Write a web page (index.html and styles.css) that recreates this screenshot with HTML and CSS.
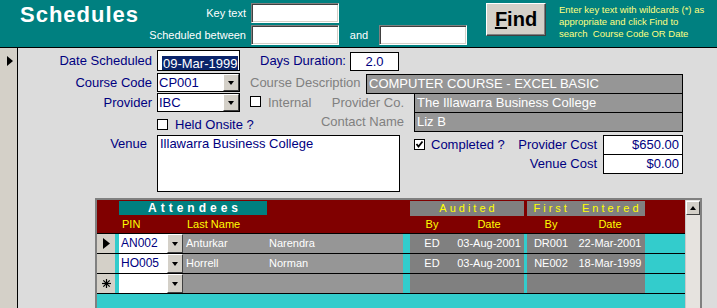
FILE: index.html
```html
<!DOCTYPE html>
<html lang="en">
<head>
  <meta charset="UTF-8" />
  <title>Schedules</title>
  <link rel="stylesheet" href="styles.css">
</head>
<body>
  <div class="header">
    <div class="title">Schedules</div>
    <div class="search">
      <span class="search-label">Key text</span>
      <span class="box"></span>
      <span></span>
      <span></span>
      <span class="search-label">Scheduled between</span>
      <span class="box"></span>
      <span class="and">and</span>
      <span class="box"></span>
    </div>
    <button class="btn-find"><u>F</u>ind</button>
    <p class="help">Enter key text with wildcards (*) as<br>appropriate and click Find to<br>search&nbsp; Course Code OR Date</p>
  </div>

  <div class="main">
    <div class="selector">
      <svg width="6" height="10" viewBox="0 0 6 10"><polygon points="0,0 6,5 0,10" fill="#000"/></svg>
    </div>

    <div class="form">
      <div class="row row-1">
        <span class="lbl">Date Scheduled</span>
        <div class="field date"><span class="selected">09-Mar-1999</span></div>
        <span class="lbl-days">Days Duration:</span>
        <div class="field duration">2.0</div>
      </div>

      <div class="row row-2">
        <span class="lbl">Course Code</span>
        <div class="combo"><span class="combo-text">CP001</span><span class="combo-btn"><i class="down"></i></span></div>
        <span class="lbl-grey lbl-desc">Course Description</span>
        <div class="field grey desc">COMPUTER COURSE - EXCEL BASIC</div>
      </div>

      <div class="row row-3">
        <span class="lbl">Provider</span>
        <div class="combo"><span class="combo-text">IBC</span><span class="combo-btn"><i class="down"></i></span></div>
        <span class="check check-internal"></span>
        <span class="lbl-grey lbl-internal">Internal</span>
        <span class="lbl-grey lbl-right">Provider Co.</span>
        <div class="field grey wide">The Illawarra Business College</div>
      </div>

      <div class="row row-4">
        <span class="check check-onsite"></span>
        <span class="lbl-check lbl-onsite">Held Onsite ?</span>
        <span class="lbl-grey lbl-right">Contact Name</span>
        <div class="field grey wide">Liz B</div>
      </div>

      <div class="row row-5">
        <span class="lbl lbl-venue">Venue</span>
        <div class="field venue">Illawarra Business College</div>
        <div class="completed">
          <span class="check"><svg width="9" height="9" viewBox="0 0 9 9"><polyline points="1.5,4 3.5,6.5 7.5,1.5" fill="none" stroke="#000" stroke-width="1.8"/></svg></span>
          <span class="lbl-check">Completed ?</span>
        </div>
        <div class="costs">
          <span class="lbl-cost">Provider Cost</span>
          <div class="field cost">$650.00</div>
          <span class="lbl-cost">Venue Cost</span>
          <div class="field cost cost-2">$0.00</div>
        </div>
      </div>

      <div class="subform">
        <div class="sheet">
          <div class="sheet-head">
            <div class="group attendees">Attendees</div>
            <div class="group audited">Audited</div>
            <div class="group entered">First&nbsp; Entered</div>
            <span class="col-pin">PIN</span>
            <span class="col-last">Last Name</span>
            <span class="col-c c-aby">By</span>
            <span class="col-c c-adate">Date</span>
            <span class="col-c c-fby">By</span>
            <span class="col-c c-fdate">Date</span>
          </div>

          <div class="sheet-row">
            <span class="cell sel"><svg width="7" height="11" viewBox="0 0 7 11"><polygon points="0,0 7,5.5 0,11" fill="#000"/></svg></span>
            <span class="cell"></span>
            <span class="cell pin"><span class="pin-text">AN002</span><span class="combo-btn"><i class="down"></i></span></span>
            <span class="cell name">Anturkar</span>
            <span class="cell name name-first">Narendra</span>
            <span class="cell"></span>
            <span class="cell dark">ED</span>
            <span class="cell dark">03-Aug-2001</span>
            <span class="cell"></span>
            <span class="cell dark">DR001</span>
            <span class="cell dark">22-Mar-2001</span>
            <span class="cell"></span>
          </div>

          <div class="sheet-row">
            <span class="cell sel"></span>
            <span class="cell"></span>
            <span class="cell pin"><span class="pin-text">HO005</span><span class="combo-btn"><i class="down"></i></span></span>
            <span class="cell name">Horrell</span>
            <span class="cell name name-first">Norman</span>
            <span class="cell"></span>
            <span class="cell dark">ED</span>
            <span class="cell dark">03-Aug-2001</span>
            <span class="cell"></span>
            <span class="cell dark">NE002</span>
            <span class="cell dark">18-Mar-1999</span>
            <span class="cell"></span>
          </div>

          <div class="sheet-row">
            <span class="cell sel"><svg width="9" height="9" viewBox="0 0 9 9" stroke="#000" stroke-width="1.2"><line x1="4.5" y1="0" x2="4.5" y2="9"/><line x1="0" y1="4.5" x2="9" y2="4.5"/><line x1="1.3" y1="1.3" x2="7.7" y2="7.7"/><line x1="7.7" y1="1.3" x2="1.3" y2="7.7"/></svg></span>
            <span class="cell"></span>
            <span class="cell pin"><span class="pin-text"></span><span class="combo-btn"><i class="down"></i></span></span>
            <span class="cell name"></span>
            <span class="cell name"></span>
            <span class="cell"></span>
            <span class="cell dark"></span>
            <span class="cell dark"></span>
            <span class="cell"></span>
            <span class="cell dark"></span>
            <span class="cell dark"></span>
            <span class="cell"></span>
          </div>
        </div>
        <div class="scrollbar">
          <span class="scroll-up"><i class="up"></i></span>
        </div>
      </div>
    </div>
  </div>
</body>
</html>
```

FILE: styles.css
```css
* {
  box-sizing: border-box;
}

body {
  margin: 0;
  width: 717px;
  height: 308px;
  overflow: hidden;
  font-family: "Liberation Sans", Arial, sans-serif;
  background-color: #dcdcdc;
}

/* top bar */
.header {
  display: flex;
  height: 48px;
  background-color: #008080;
  border-bottom: 1px solid #000;
}

.title {
  flex-shrink: 0;
  width: 150px;
  padding: 4px 0 0 20px;
  color: #fff;
  font-size: 22px;
  line-height: 22px;
  font-weight: bold;
  letter-spacing: 1px;
}

.search {
  display: grid;
  grid-template-columns: 101px 88px 40px 88px;
  grid-auto-rows: 20px;
  row-gap: 2px;
  padding-top: 3px;
  color: #fff;
  font-size: 11px;
  line-height: 20px;
}

.search-label {
  display: flex;
  justify-content: flex-end;
  padding-right: 5px;
  white-space: nowrap;
}

.and {
  text-align: center;
}

.box {
  background-color: #fff;
  border: 1px solid;
  border-color: #808080 #fff #fff #808080;
  box-shadow: inset 1px 1px #404040, inset -1px -1px #d4d0c8;
}

.btn-find {
  flex-shrink: 0;
  margin: 3px 0 0 19px;
  width: 60px;
  height: 33px;
  padding: 0;
  background-color: #d4d0c8;
  border: 1px solid;
  border-color: #fff #404040 #404040 #fff;
  box-shadow: inset -1px -1px #808080;
  color: #000;
  font-family: "Liberation Sans", Arial, sans-serif;
  font-size: 20px;
  font-weight: bold;
}

.help {
  margin: 4px 0 0 13px;
  color: #ffff80;
  font-size: 9.5px;
  line-height: 12px;
  white-space: nowrap;
}

/* form body */
.main {
  display: flex;
  height: 260px;
}

.selector {
  flex-shrink: 0;
  width: 18px;
  background-color: #d4d0c8;
  border-right: 1px solid #000;
  padding: 4px 0 0 7px;
}

.form {
  flex: 1;
  min-width: 0;
  padding: 2px 34px 0 0;
  font-size: 13px;
}

.row {
  display: flex;
  align-items: flex-start;
}

.row > * {
  flex-shrink: 0;
}

.lbl {
  width: 134px;
  margin-right: 5px;
  text-align: right;
  color: #000080;
}

.field {
  background-color: #fff;
  border: 1px solid #000;
  color: #000080;
  white-space: nowrap;
  overflow: hidden;
}

.row-1 {
  height: 21px;
  line-height: 21px;
}

.date {
  width: 83px;
  height: 21px;
  padding: 2px 0 0 4px;
}

.selected {
  display: inline-block;
  height: 16px;
  line-height: 16px;
  padding: 0 1px;
  background-color: #0a246a;
  color: #fff;
  white-space: nowrap;
}

.lbl-days {
  width: 90px;
  margin-left: 20px;
  color: #000080;
}

.duration {
  width: 49px;
  height: 19px;
  margin-top: 2px;
  line-height: 17px;
  text-align: center;
}

.row-2 {
  height: 20px;
  line-height: 20px;
  margin-top: 2px;
}

.row-3,
.row-4 {
  height: 19px;
  line-height: 19px;
}

.combo {
  display: flex;
  width: 83px;
  height: 19px;
  border: 1px solid #000;
  background-color: #fff;
}

.combo-text {
  flex: 1;
  padding-left: 1px;
  line-height: 17px;
  color: #000080;
}

.combo-btn {
  display: flex;
  align-items: center;
  justify-content: center;
  width: 16px;
  background-color: #d4d0c8;
  border: 1px solid;
  border-color: #fff #404040 #404040 #fff;
}

.down {
  width: 0;
  height: 0;
  border-left: 3px solid transparent;
  border-right: 3px solid transparent;
  border-top: 4px solid #000;
}

.up {
  width: 0;
  height: 0;
  border-left: 3px solid transparent;
  border-right: 3px solid transparent;
  border-bottom: 4px solid #000;
}

.lbl-grey {
  color: #808080;
}

.lbl-desc {
  width: 116px;
  margin-left: 10px;
}

.grey {
  height: 20px;
  padding-left: 2px;
  line-height: 18px;
  background-color: #969696;
  color: #fff;
}

.row > .desc {
  flex: 1;
  flex-shrink: 1;
  margin-top: 1px;
}

.wide {
  width: 269px;
}

.lbl-right {
  margin-left: auto;
  margin-right: 10px;
}

.check {
  display: flex;
  align-items: center;
  justify-content: center;
  width: 11px;
  height: 11px;
  background-color: #fff;
  border: 1px solid #000;
}

.check-internal {
  margin: 3px 0 0 10px;
}

.lbl-internal {
  margin-left: 7px;
}

.check-onsite {
  margin: 7px 0 0 139px;
}

.lbl-check {
  color: #000080;
}

.lbl-onsite {
  margin: 3px 0 0 7px;
}

.row-5 {
  margin-top: 4px;
  height: 57px;
}

.lbl-venue {
  padding-right: 5px;
  line-height: 18px;
}

.venue {
  width: 243px;
  height: 57px;
  padding-left: 2px;
  line-height: 16px;
}

.completed {
  display: flex;
  align-items: center;
  gap: 6px;
  margin: 4px 0 0 14px;
  line-height: 11px;
}

.costs {
  display: grid;
  grid-template-columns: auto 80px;
  grid-template-rows: 19px 20px;
  column-gap: 6px;
  margin-left: auto;
}

.lbl-cost {
  text-align: right;
  color: #000080;
  line-height: 19px;
}

.cost {
  height: 20px;
  padding-right: 3px;
  line-height: 18px;
  text-align: right;
}

.lbl-cost:nth-of-type(2) {
  line-height: 20px;
}

/* attendees subform */
.subform {
  display: flex;
  width: 607px;
  height: 120px;
  margin: 6px 0 0 77px;
  border: 2px solid #808080;
  border-bottom: none;
}

.sheet {
  flex-shrink: 0;
  width: 588px;
  background-color: #33cccc;
  font-size: 11px;
}

.sheet-head,
.sheet-row {
  display: grid;
  grid-template-columns: 18px 4px 64px 82px 138px 7px 44px 70px 3px 48px 70px 40px;
}

.sheet-head {
  height: 34px;
  grid-template-rows: 15px 16px;
  padding-top: 1px;
  background-color: #800000;
  border-bottom: 1px solid #000;
  color: #ffff00;
  line-height: 16px;
}

.group {
  grid-row: 1;
  text-align: center;
  line-height: 15px;
}

.attendees {
  grid-column: 3 / 6;
  width: 148px;
  height: 14px;
  padding-left: 4px;
  background-color: #008080;
  color: #fff;
  font-size: 12px;
  font-weight: bold;
  line-height: 14px;
  letter-spacing: 4px;
}

.audited,
.entered {
  padding-left: 3px;
  background-color: #808080;
  letter-spacing: 3px;
}

.audited {
  grid-column: 7 / 9;
}

.entered {
  grid-column: 10 / 12;
}

.col-pin {
  grid-row: 2;
  grid-column: 3;
  padding-left: 3px;
}

.col-last {
  grid-row: 2;
  grid-column: 4 / 6;
  padding-left: 4px;
}

.col-c {
  grid-row: 2;
  text-align: center;
}

.c-aby { grid-column: 7; }
.c-adate { grid-column: 8; }
.c-fby { grid-column: 10; }
.c-fdate { grid-column: 11; }

.sheet-row {
  height: 20px;
  border-bottom: 1px solid #000;
  line-height: 19px;
}

.cell {
  white-space: nowrap;
}

.sel {
  display: flex;
  align-items: center;
  justify-content: center;
  background-color: #d4d0c8;
}

.pin {
  display: flex;
  background-color: #fff;
}

.pin-text {
  flex: 1;
  padding-left: 2px;
  color: #000080;
  font-size: 12px;
}

.name {
  padding-left: 3px;
  background-color: #969696;
  color: #fff;
}

.name-first {
  padding-left: 4px;
}

.dark {
  background-color: #808080;
  color: #fff;
  text-align: center;
}

.scrollbar {
  flex-shrink: 0;
  width: 15px;
  padding-top: 1px;
  background-color: #e6e3df;
  border-left: 1px solid #c8c8c8;
}

.scroll-up {
  display: flex;
  align-items: center;
  justify-content: center;
  height: 14px;
  background-color: #d4d0c8;
  border: 1px solid;
  border-color: #fff #404040 #404040 #fff;
}
```
